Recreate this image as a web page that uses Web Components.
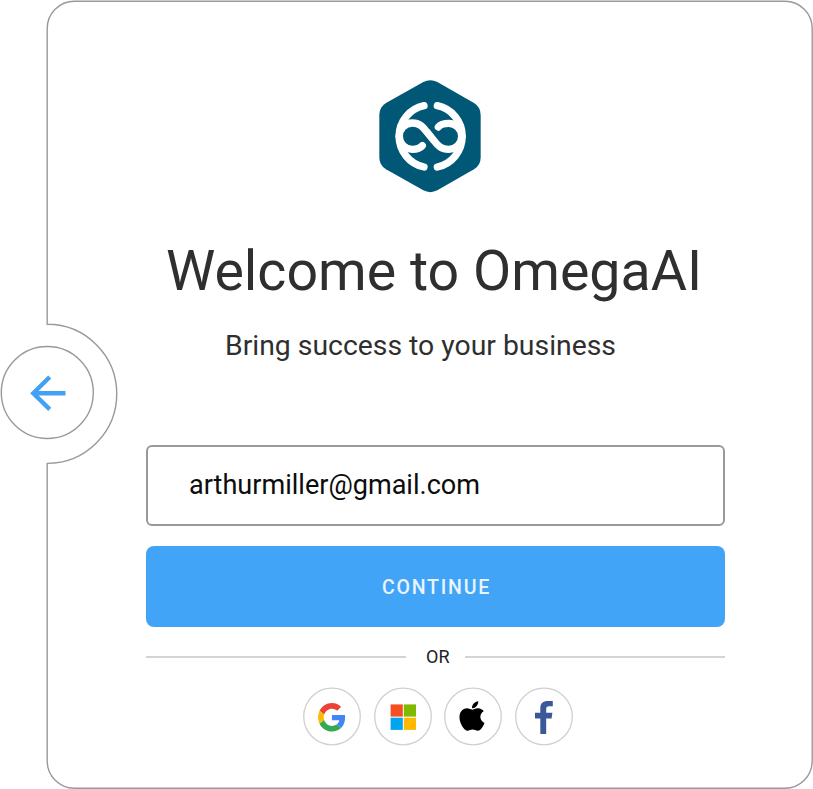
<!DOCTYPE html>
<html lang="en">
<head>
<meta charset="utf-8">
<title>Welcome to OmegaAI</title>
<style>
html, body { margin: 0; background: #fff; }
body { font-family: Roboto, "Liberation Sans", sans-serif; width: 813px; height: 789px; overflow: hidden; }
</style>
</head>
<body>
<login-card>
  <back-button slot="back"></back-button>
  <omega-logo></omega-logo>
  <fit-text class="title" style="--size:56px;--line:66px;--color:#2f2f2f;margin:38px 3px 0 0" w="536">Welcome to OmegaAI</fit-text>
  <fit-text style="--size:28px;--line:34px;--color:#2f2f2f;margin:25px 30px 0 0" w="391">Bring success to your business</fit-text>
  <email-field><fit-text style="--size:27.5px;--line:34px;--color:#0c0c0c" w="291">arthurmiller@gmail.com</fit-text></email-field>
  <primary-button><fit-text style="--size:20px;--line:24px;--color:#e9f4fe;--weight:500;--spacing:1.8px;margin:1px 0 0 2px" w="109">CONTINUE</fit-text></primary-button>
  <or-divider><fit-text style="--size:17.5px;--line:20px;--color:#222" w="23.5">OR</fit-text></or-divider>
  <social-row>
    <social-button brand="google"></social-button>
    <social-button brand="microsoft"></social-button>
    <social-button brand="apple"></social-button>
    <social-button brand="facebook"></social-button>
  </social-row>
</login-card>
<script>
function define(name, html, init) {
  customElements.define(name, class extends HTMLElement {
    constructor() {
      super();
      this.attachShadow({ mode: 'open' }).innerHTML = html;
    }
    connectedCallback() { if (init) init(this, this.shadowRoot); }
  });
}

/* Card: outline with a round notch that holds the back button. */
define('login-card', `
<style>
:host { display: grid; grid-template-columns: 94px 1fr; width: 813px; height: 789px; position: relative; align-items: center; box-sizing: border-box; }
.frame { position: absolute; inset: 0; }
.back { position: relative; align-self: start; padding-top: 345px; height: 94px; }
.body { position: relative; align-self: start; display: flex; flex-direction: column; align-items: center; padding: 70px 88px 0 52px; }
</style>
<svg class="frame" width="813" height="789" viewBox="0 0 813 789" fill="none" stroke="#999" stroke-width="1.4">
<path d="M47.2 324.3V28.5A27.2 27.2 0 0 1 74.4 1.2H785A27.2 27.2 0 0 1 812.2 28.5V761A27.2 27.2 0 0 1 785 788.2H74.4A27.2 27.2 0 0 1 47.2 761V463.4A69.5 69.5 0 0 0 47.2 324.3Z"/>
</svg>
<div class="back"><slot name="back"></slot></div>
<div class="body"><slot></slot></div>`);

define('back-button', `
<style>:host { display: block; width: 95px; height: 95px; } svg { display: block; }</style>
<svg width="95" height="95" viewBox="0 0 95 95" fill="none">
<circle cx="47.3" cy="47.5" r="46" stroke="#999" stroke-width="1.4"/>
<path d="M65.5 48.2H33M49.7 32L33.3 48.2L49.7 64.4" stroke="#42a1f5" stroke-width="4.4"/>
</svg>`);

define('omega-logo', `
<style>:host { display: block; width: 120px; height: 130px; margin-right: 11px; } svg { display: block; }</style>
<svg width="120" height="130" viewBox="0 0 360 390" fill="none">
<path fill="#005776" d="M160 36Q181 25 202 36L312 99Q332 111 332 135V262Q332 286 312 298L202 361Q181 372 160 361L48 298Q28 286 28 262V135Q28 111 48 99Z"/>
<g stroke="#fff" stroke-width="22" stroke-linecap="round">
<path d="M162 107A94 94 0 0 0 162 291M202 107A94 94 0 0 1 202 291"/>
<path d="M88 199A39 39 0 0 1 127 159C150 159 160 172 170 185L192 212C204 228 214 238 236 238A39 39 0 0 0 275 199"/>
<path d="M88 199A39 39 0 0 0 127 238Q148 238 157 227M275 199A39 39 0 0 0 236 160Q214 160 205 171"/>
</g>
</svg>`);

/* One line of text, drawn at exactly the width given by its "w" attribute. */
define('fit-text', `
<style>
:host { display: block; height: var(--line); }
span { display: inline-block; white-space: nowrap; transform-origin: 0 0; font-size: var(--size); line-height: var(--line); color: var(--color); font-weight: var(--weight, 400); letter-spacing: var(--spacing, 0); }
</style>
<span><slot></slot></span>`, (host, root) => {
  const w = Number(host.getAttribute('w'));
  const span = root.querySelector('span');
  const natural = span.getBoundingClientRect().width;
  host.style.width = w + 'px';
  span.style.transform = 'scaleX(' + w / natural + ')';
});

define('email-field', `
<style>
:host { display: flex; box-sizing: border-box; width: 579px; height: 81px; margin: 82px 0 0 0; padding: 21px 0 0 41px; border: 2px solid #999; border-radius: 6px; }
</style><slot></slot>`);

define('primary-button', `
<style>
:host { display: flex; box-sizing: border-box; width: 579px; height: 81px; margin-top: 19.6px; border-radius: 8px; background: #42a4f6; align-items: center; justify-content: center; }
</style><slot></slot>`);

define('or-divider', `
<style>
:host { display: flex; width: 579px; height: 20px; margin-top: 20.4px; align-items: center; }
i { height: 2px; background: #d4d4d4; }
.a { width: 260px; margin-right: 20px; } .b { flex: 1; margin-left: 15.5px; }
</style><i class="a"></i><slot></slot><i class="b"></i>`);

define('social-row', `
<style>:host { display: flex; gap: 12.6px; margin: 20px 0 0 5px; }</style><slot></slot>`);

const marks = {
  google: '<g transform="translate(15.1 16) scale(.575 .595)"><path fill="#ea4335" d="M24 9.5c3.54 0 6.71 1.22 9.21 3.6l6.85-6.85C35.9 2.38 30.47 0 24 0 14.62 0 6.51 5.38 2.56 13.22l7.98 6.19C12.43 13.72 17.74 9.5 24 9.5z"/><path fill="#4285f4" d="M46.98 24.55c0-1.57-.15-3.09-.38-4.55H24v9.02h12.94c-.58 2.96-2.26 5.48-4.78 7.18l7.73 6c4.51-4.18 7.09-10.36 7.09-17.65z"/><path fill="#fbbc05" d="M10.53 28.59c-.48-1.45-.76-2.99-.76-4.59s.27-3.14.76-4.59l-7.98-6.19C.92 16.46 0 20.12 0 24c0 3.88.92 7.54 2.56 10.78l7.97-6.19z"/><path fill="#34a853" d="M24 48c6.48 0 11.93-2.13 15.89-5.81l-7.73-6c-2.15 1.45-4.92 2.3-8.16 2.3-6.26 0-11.57-4.22-13.47-9.91l-7.98 6.19C6.51 42.62 14.62 48 24 48z"/></g>',
  microsoft: '<path fill="#f25022" d="M16.6 17.4h12.2v12.2H16.6z"/><path fill="#7fba00" d="M29.8 17.4h12.2v12.2H29.8z"/><path fill="#00a4ef" d="M16.6 30.7h12.2v12.2H16.6z"/><path fill="#ffb900" d="M29.8 30.7h12.2v12.2H29.8z"/>',
  apple: '<g transform="translate(15.2 12.1) scale(.0665 .066)"><path fill="#000" d="M318.7 268.7c-.2-36.7 16.4-64.4 50-84.8-18.8-26.9-47.2-41.7-84.7-44.6-35.5-2.8-74.3 20.7-88.5 20.7-15 0-49.4-19.7-76.4-19.7C63.3 141.2 4 184.8 4 273.5q0 39.3 14.4 81.2c12.8 36.7 59 126.7 107.2 125.2 25.2-.6 43-17.9 75.8-17.9 31.8 0 48.3 17.9 76.4 17.9 48.6-.7 90.4-82.5 102.6-119.3-65.2-30.7-61.7-90-61.7-91.9zm-56.6-164.2c27.3-32.4 24.8-61.9 24-72.5-24.1 1.4-52 16.4-67.9 34.9-17.5 19.8-27.8 44.3-25.6 71.9 26.1 2 49.9-11.4 69.5-34.3z"/></g>',
  facebook: '<path fill="#3b5998" d="M25.3 47V31.5H20V25.7H25.3V20.9C25.3 16.3 28 14 33 14H37.8V19.3H34.2C32 19.3 31.2 20.3 31.2 22V25.7H37.4L36.6 31.5H31.2V47Z"/>'
};
define('social-button', `
<style>:host { display: block; width: 58px; height: 59px; } svg { display: block; }</style>
<svg width="58" height="59" viewBox="0 0 58 59"><circle cx="29" cy="29.5" r="28.3" fill="#fff" stroke="#d0d0d0" stroke-width="1.3"/><g id="mark"></g></svg>`,
(host, root) => { root.getElementById('mark').innerHTML = marks[host.getAttribute('brand')]; });
</script>
</body>
</html>
